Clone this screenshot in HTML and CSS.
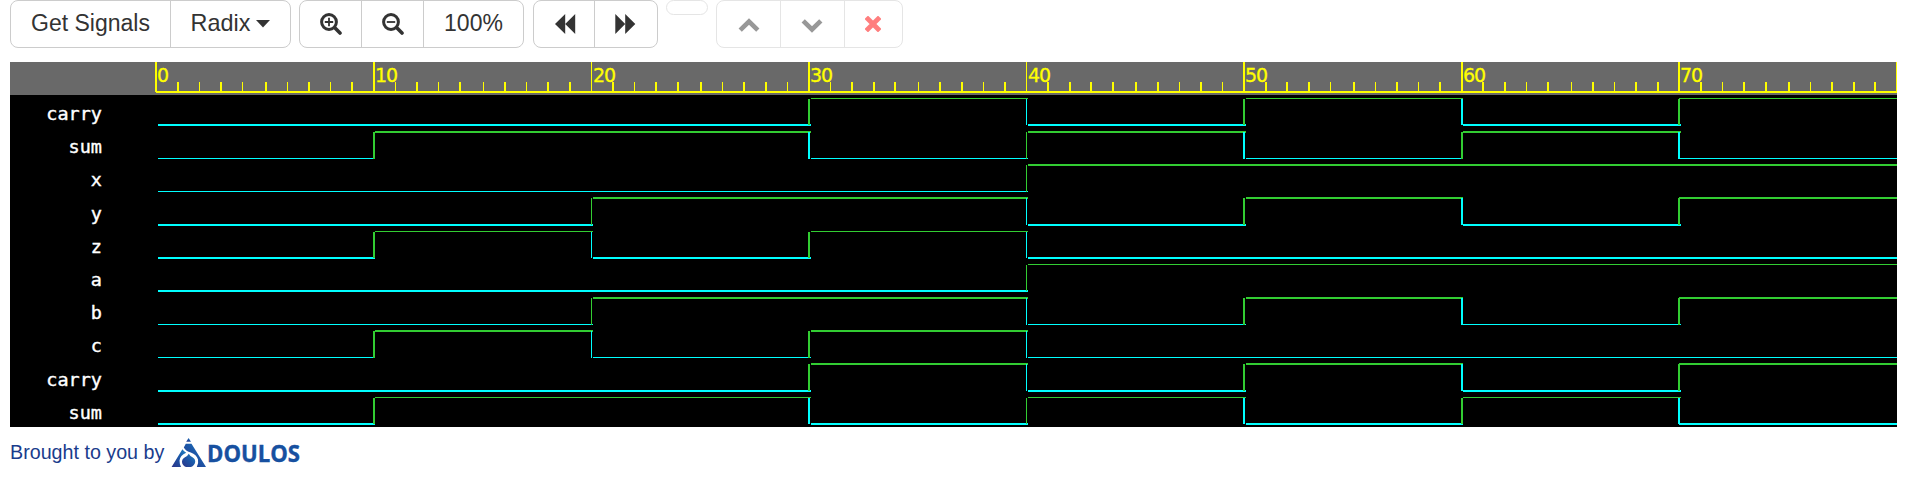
FILE: index.html
```html
<!DOCTYPE html>
<html lang="en">
<head>
<meta charset="utf-8">
<title>Waveform viewer</title>
<link rel="stylesheet" href="styles.css">
</head>
<body>
<div class="toolbar">
  <div class="group group-source">
    <button class="btn btn-signals">Get Signals</button>
    <button class="btn btn-radix">Radix<svg class="caret" width="14" height="8" viewBox="0 0 14 8"><path d="M0 0H14L7 7.6Z"/></svg></button>
  </div>
  <div class="group group-zoom">
    <button class="btn btn-icon" aria-label="Zoom in"><svg class="icon" width="22" height="22" viewBox="0 0 22 22"><circle cx="9" cy="9" r="7.4" fill="none" stroke="currentColor" stroke-width="3"/><path d="M14.8 14.8L20 20" stroke="currentColor" stroke-width="3.6" stroke-linecap="round"/><path d="M4.8 9h8.4M9 4.8v8.4" stroke="currentColor" stroke-width="1.8"/></svg></button>
    <button class="btn btn-icon" aria-label="Zoom out"><svg class="icon" width="22" height="22" viewBox="0 0 22 22"><circle cx="9" cy="9" r="7.4" fill="none" stroke="currentColor" stroke-width="3"/><path d="M14.8 14.8L20 20" stroke="currentColor" stroke-width="3.6" stroke-linecap="round"/><path d="M4.8 9h8.4" stroke="currentColor" stroke-width="1.8"/></svg></button>
    <button class="btn btn-percent">100%</button>
  </div>
  <div class="group group-seek">
    <button class="btn btn-back" aria-label="Back"><svg class="icon" width="21" height="20" viewBox="0 0 21 20"><path d="M0 10L10.2 0V10L20.2 0V20L10.2 10V20Z"/></svg></button>
    <button class="btn btn-forward" aria-label="Forward"><svg class="icon" width="21" height="20" viewBox="0 0 21 20"><path d="M20.3 10L10.2 0V10L0.3 0V20L10.2 10V20Z"/></svg></button>
  </div>
  <div class="group group-empty faded"></div>
  <div class="group group-edit faded">
    <button class="btn btn-up" aria-label="Move up"><svg class="icon" width="22" height="15" viewBox="0 0 22 15"><path d="M2.2 12.2L11 3.5L19.8 12.2" fill="none" stroke="currentColor" stroke-width="4.6"/></svg></button>
    <button class="btn btn-down" aria-label="Move down"><svg class="icon" width="22" height="15" viewBox="0 0 22 15"><path d="M2.2 2.8L11 11.5L19.8 2.8" fill="none" stroke="currentColor" stroke-width="4.6"/></svg></button>
    <button class="btn btn-remove" aria-label="Remove"><svg class="icon" width="16" height="16" viewBox="0 0 16 16"><path d="M3 3L13 13M13 3L3 13" stroke="currentColor" stroke-width="4.8" stroke-linecap="square" fill="none"/></svg></button>
  </div>
</div>
<div class="viewer">
  <div class="names">
    <div class="name">carry</div><div class="name">sum</div><div class="name">x</div><div class="name">y</div><div class="name">z</div><div class="name">a</div><div class="name">b</div><div class="name">c</div><div class="name">carry</div><div class="name">sum</div>
  </div>
  <svg class="waves" width="1742" height="365" viewBox="155 62 1742 365" shape-rendering="crispEdges"></svg>
</div>
<div class="sponsor">
  <span class="sponsor-text">Brought to you by</span>
  <svg class="logo" width="134" height="40" viewBox="171 437 134 40">
    <defs><linearGradient id="mark" x1="0" y1="1" x2="1" y2="0"><stop offset="0" stop-color="#2c3388"/><stop offset="0.55" stop-color="#1c57a8"/><stop offset="1" stop-color="#2084c4"/></linearGradient></defs>
    <g fill="url(#mark)">
      <path d="M188.6 438L191 441.8H186.2Z"/>
      <path d="M171.6 467L182.4 449.2Q184 451.6 186.2 452.7Q180 455.5 179.5 460.5Q179.5 464 181 467Z"/>
      <path d="M185.8 443.7H191.5L206 467H196.8Q198.8 463 198 459.5Q196.5 454.5 190.8 452.4Q186 451.5 183.8 447.4Z"/>
      <path d="M188.8 453.7Q190 456 192.5 457.2Q195.5 459 195.2 462Q194.5 465.5 191 467H186Q182.3 465.5 182 462Q181.8 459 185 457.2Q187.6 456 188.8 453.7Z"/>
    </g>
    <text class="logo-text" x="207" y="462" textLength="93" lengthAdjust="spacingAndGlyphs">DOULOS</text>
  </svg>
</div>
<script src="waves.js"></script>
</body>
</html>
```
FILE: styles.css
```css
body {
  margin: 0;
  padding: 0 15px 0 10px;
  background: #fff;
  font-family: "Liberation Sans", Arial, sans-serif;
  color: #333;
  overflow: hidden;
}
.toolbar { display: flex; align-items: flex-start; height: 62px; }
.group {
  display: flex;
  box-sizing: border-box;
  height: 48px;
  border: 1px solid #ccc;
  border-radius: 8px;
  background: #fff;
}
.btn {
  display: flex;
  align-items: center;
  justify-content: center;
  box-sizing: border-box;
  flex: 1 1 0;
  margin: 0;
  padding: 0 0 1px;
  border: 0;
  border-left: 1px solid #ccc;
  background: none;
  color: inherit;
  font: 23px "Liberation Sans", Arial, sans-serif;
  white-space: nowrap;
}
.btn:first-child { border-left: 0; }
.icon, .caret { display: block; flex: none; fill: currentColor; }
.group-source { width: 281px; }
.btn-signals { flex: 0 0 159px; }
.btn-radix { font-size: 23.4px; }
.caret { margin-left: 6px; }
.group-zoom { width: 225px; margin-left: 8px; }
.btn-icon { flex: 0 0 62px; }
.btn-icon:first-child { flex-basis: 61px; }
.group-seek { width: 125px; margin-left: 9px; }
.btn-back { flex: 0 0 60px; padding: 0 0 1px 2px; }
.btn-forward { padding-right: 2px; }
.group-empty { width: 42px; height: 15px; margin-left: 8px; }
.group-edit { width: 187px; margin-left: 8px; }
.faded { opacity: 0.5; }
.btn-up { flex: 0 0 63px; padding: 2px 0 0; }
.btn-down { flex: 0 0 64px; padding: 2px 2px 0 0; }
.btn-remove { color: #f00; padding: 0 2px 0 0; }

.viewer {
  display: flex;
  height: 365px;
  background: linear-gradient(#696969 33px, #000 33px);
}
.names {
  box-sizing: border-box;
  width: 145px;
  padding: 36px 53px 0 0;
  color: #fff;
  font: 18.5px "DejaVu Sans Mono", monospace;
  -webkit-text-stroke: 0.4px #fff;
  text-align: right;
}
.name { height: 33.2px; line-height: 32px; }
.waves { display: block; flex: none; }
.tick { fill: #ff0; }
.hi { fill: #32cd32; }
.lo { fill: #0ff; }
.time {
  fill: #ff0;
  stroke: #ff0;
  stroke-width: 0.3px;
  font: 19px "DejaVu Sans", sans-serif;
  letter-spacing: -1px;
}

.sponsor { display: flex; height: 56px; color: #1a3c8c; }
.sponsor-text {
  width: 161px;
  font-size: 19.7px;
  line-height: 23px;
  padding-top: 14px;
  white-space: nowrap;
}
.logo { display: block; margin-top: 10px; overflow: visible; }
.logo-text {
  font: bold 23px "Open Sans", "Noto Sans", sans-serif;
  fill: #1750a0;
  stroke: #1750a0;
  stroke-width: 0.4px;
}
```
FILE: waves.js
```javascript
const svg = document.querySelector('.waves');
const NS = 'http://www.w3.org/2000/svg';

function box(x, y, width, height, cls) {
  const r = document.createElementNS(NS, 'rect');
  Object.entries({ x, y, width, height, class: cls }).forEach(([k, v]) => r.setAttribute(k, v));
  svg.appendChild(r);
}

// Ruler: [x, width] of each major division, followed by its nine minor ones
const majors = [[155, 2], [373, 2], [591, 1], [808, 2], [1026, 1], [1243, 2], [1461, 2], [1678, 2], [1896, 1]];
const minors = [
  [177, 2], [199, 1], [220, 2], [242, 1], [265, 2], [287, 1], [308, 2], [330, 1], [351, 2],
  [395, 1], [416, 2], [438, 1], [459, 2], [483, 1], [504, 2], [526, 1], [547, 2], [569, 2],
  [612, 2], [634, 1], [655, 2], [677, 2], [700, 2], [722, 1], [743, 2], [765, 2], [787, 1],
  [830, 1], [851, 2], [873, 2], [894, 2], [918, 1], [939, 2], [961, 2], [983, 1], [1004, 2],
  [1047, 2], [1069, 2], [1090, 2], [1112, 2], [1135, 2], [1157, 2], [1179, 1], [1200, 2], [1222, 1],
  [1265, 2], [1286, 2], [1308, 2], [1330, 1], [1353, 2], [1375, 1], [1396, 2], [1418, 1], [1439, 2],
  [1482, 2], [1504, 2], [1526, 1], [1547, 2], [1571, 1], [1592, 2], [1614, 1], [1635, 2], [1657, 2],
  [1700, 2], [1722, 1], [1743, 2], [1765, 2], [1788, 2], [1810, 1], [1831, 2], [1853, 2], [1874, 2]
];
majors.forEach(([x, w]) => box(x, 62, w, 30, 'tick'));
minors.forEach(([x, w]) => box(x, 82, w, 9, 'tick'));
box(156, 91, 1741, 2, 'tick');
majors.slice(0, 8).forEach(([x], i) => {
  const t = document.createElementNS(NS, 'text');
  t.setAttribute('x', x + 2);
  t.setAttribute('y', 82);
  t.setAttribute('class', 'time');
  t.textContent = String(i * 10);
  svg.appendChild(t);
});

// Each signal: values per ten time units, then y and thickness of the high and low levels
const signals = [
  ['00010101', 98, 1, 124, 2],
  ['01101010', 131, 2, 158, 1],
  ['00001111', 164, 2, 191, 1],
  ['00110101', 197, 2, 224, 2],
  ['01010000', 231, 1, 257, 2],
  ['00001111', 264, 1, 290, 2],
  ['00110101', 297, 2, 324, 1],
  ['01010000', 330, 2, 357, 1],
  ['00010101', 363, 2, 390, 2],
  ['01101010', 397, 1, 423, 2]
];
const starts = [158, 375, 593, 811, 1028, 1246, 1463, 1679];
const ends = [375, 593, 811, 1028, 1246, 1463, 1681, 1897];
signals.forEach(([bits, hy, hh, ly, lh]) => {
  let from = 0;
  for (let i = 1; i <= 8; i++) {
    if (bits[i] === bits[from]) continue;
    const high = bits[from] === '1';
    box(starts[from], high ? hy : ly, ends[i - 1] - starts[from], high ? hh : lh, high ? 'hi' : 'lo');
    from = i;
  }
  for (let i = 1; i < 8; i++) {
    if (bits[i] === bits[i - 1]) continue;
    box(majors[i][0], hy + 1, majors[i][1], ly - hy, bits[i] === '1' ? 'hi' : 'lo');
  }
});
```
